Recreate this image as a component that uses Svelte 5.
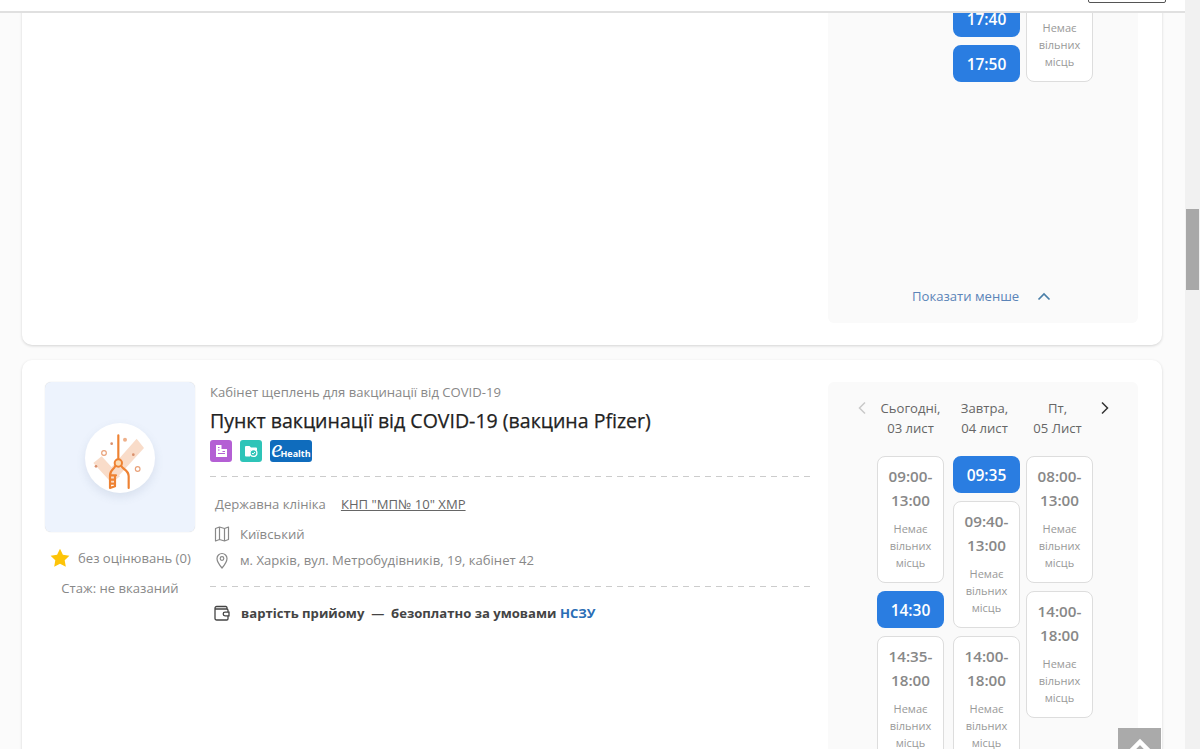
<script>
  const none = 'Немає вільних місць';

  // slot lists per day column, range slots are the tall grey ones
  const days = [
    {
      top: 'Сьогодні,', bottom: '03 лист',
      slots: [{ from: '09:00', to: '13:00' }, { time: '14:30' }, { from: '14:35', to: '18:00' }]
    },
    {
      top: 'Завтра,', bottom: '04 лист',
      slots: [{ time: '09:35' }, { from: '09:40', to: '13:00' }, { from: '14:00', to: '18:00' }]
    },
    {
      top: 'Пт,', bottom: '05 Лист',
      slots: [{ from: '08:00', to: '13:00' }, { from: '14:00', to: '18:00' }]
    }
  ];

  // tail of the previous card, its upper part sits under the top bar
  const prevDays = [[], [{ time: '17:40' }, { time: '17:50' }], [{}]];
</script>

{#snippet slot(s)}
  {#if s.time}
    <button class="slot free">{s.time}</button>
  {:else}
    <div class="slot busy" class:no-range={!s.from}>
      {#if s.from}
        <div class="range">{s.from}-<br />{s.to}</div>
      {/if}
      <div class="none">{none}</div>
    </div>
  {/if}
{/snippet}

<div class="page">
  <div class="main">
    <header class="topbar"><span class="top-btn"></span></header>

    <div class="list">
      <section class="card card-prev">
        <div class="spacer"></div>
        <aside class="schedule">
          <div class="columns prev-columns">
            {#each prevDays as col}
              <div class="col">
                {#each col as s}
                  {@render slot(s)}
                {/each}
              </div>
            {/each}
          </div>
          <a class="less" href="#less">
            <span>Показати менше</span>
            <svg width="14" height="9" viewBox="0 0 14 9"><path d="M1.5 7.500 7 2l5.500 5.500" fill="none" stroke="#4a7fa8" stroke-width="1.700" /></svg>
          </a>
        </aside>
      </section>

      <section class="card">
        <div class="profile">
          <div class="avatar">
            <div class="circle">
              <svg width="70" height="70" viewBox="15 15 210 210">
                <path d="M40 135 65 115 120 175 95 195ZM170 62 192 90 110 180 88 155Z" fill="#f9dcc9" />
                <circle cx="72" cy="105" r="7" fill="none" stroke="#e9a27a" stroke-width="3.500" />
                <circle cx="173" cy="153" r="7" fill="none" stroke="#e9a27a" stroke-width="3.500" />
                <circle cx="95" cy="77" r="4" fill="#d98f6c" />
                <circle cx="135" cy="65" r="6" fill="#eeb08a" />
                <circle cx="160" cy="110" r="4" fill="#d98f6c" />
                <circle cx="48" cy="145" r="4" fill="#d98f6c" />
                <path d="M115 52V124M90 210V172C90 155 105 152 105 145M125 145C125 152 146 155 146 175V210M90 172H108M92 185H105M92 197H105M105 172V205L90 210" fill="none" stroke="#ee8233" stroke-width="6.500" stroke-linecap="round" stroke-linejoin="round" />
                <circle cx="115" cy="135" r="11" fill="#fbdcb5" stroke="#ee8233" stroke-width="6" />
              </svg>
            </div>
          </div>
          <div class="rating">
            <svg width="20" height="20" viewBox="0 0 20 20"><path d="M10 .8l2.900 6 6.500.9-4.700 4.600 1.100 6.500L10 15.700l-5.800 3.100 1.100-6.500L.6 7.700l6.500-.9z" fill="#fdc408" /></svg>
            <span>без оцінювань (0)</span>
          </div>
          <div class="exp">Стаж: не вказаний</div>
        </div>

        <div class="info">
          <div class="kind">Кабінет щеплень для вакцинації від COVID-19</div>
          <h2>Пункт вакцинації від COVID-19 (вакцина Pfizer)</h2>
          <div class="badges dashed">
            <span class="badge purple">
              <svg width="16" height="16" viewBox="0 0 16 16"><path d="M3 2h5.500v4H14v8H3z" fill="#fff" /><path d="M5 4.500h1.500M5 7h1.500M9.500 8.500H12M5 10.500h7" stroke="#b45fd4" stroke-width="1" /></svg>
            </span>
            <span class="badge teal">
              <svg width="16" height="16" viewBox="0 0 16 16"><path d="M2 4a1 1 0 0 1 1-1h3.500l1.500 1.500h5a1 1 0 0 1 1 1V7H7v6.500H3a1 1 0 0 1-1-1z" fill="#fff" /><circle cx="10.500" cy="10" r="3.400" fill="none" stroke="#fff" stroke-width="1.200" /><path d="M9 10l1.100 1.100 1.900-2.100" fill="none" stroke="#fff" stroke-width="1" /></svg>
            </span>
            <span class="badge ehealth"><i>e</i><b>Health</b></span>
          </div>

          <div class="rows dashed">
            <div class="row clinic">
              <span>Державна клініка</span>
              <a href="#clinic">КНП "МП№ 10" ХМР</a>
            </div>
            <div class="row">
              <svg width="16" height="16" viewBox="0 0 16 16"><path d="M1.500 2.500 5.500 1l5 1.500 4-1.500v12.500l-4 1.500-5-1.500-4 1.500zM5.500 1v12.500M10.500 2.500V15" fill="none" stroke="#888" stroke-width="1.200" stroke-linejoin="round" /></svg>
              <span>Київський</span>
            </div>
            <div class="row">
              <svg width="16" height="17" viewBox="0 0 16 17"><path d="M8 16C5 12.500 3 10 3 6.500a5 5 0 0 1 10 0C13 10 11 12.500 8 16z" fill="none" stroke="#888" stroke-width="1.200" stroke-linejoin="round" /><circle cx="8" cy="6.500" r="1.800" fill="none" stroke="#888" stroke-width="1.200" /></svg>
              <span>м. Харків, вул. Метробудівників, 19, кабінет 42</span>
            </div>
          </div>

          <div class="price">
            <svg width="16" height="16" viewBox="0 0 16 16"><path d="M13 3.500V2.700A1.200 1.200 0 0 0 11.800 1.500H2.700A1.700 1.700 0 0 0 1 3.200v10A1.700 1.700 0 0 0 2.700 15h10a1.300 1.300 0 0 0 1.300-1.300V11M14 7V5.300A1.300 1.300 0 0 0 12.700 4H1.500M15 7.200H11a1.800 1.800 0 0 0 0 3.600h4z" fill="none" stroke="#444" stroke-width="1.300" /></svg>
            <span class="price-text">вартість прийому&nbsp; —&nbsp; безоплатно за умовами <a href="#nszu">НСЗУ</a></span>
          </div>
        </div>

        <aside class="schedule">
          <div class="head">
            <span class="arrow left">
              <svg width="10" height="14" viewBox="0 0 10 14"><path d="M8 1.500 2.500 7 8 12.500" fill="none" stroke="#c9c9c9" stroke-width="1.500" /></svg>
            </span>
            <div class="columns">
              {#each days as d}
                <div class="col day">{d.top}<br />{d.bottom}</div>
              {/each}
            </div>
            <span class="arrow right">
              <svg width="10" height="14" viewBox="0 0 10 14"><path d="M2 1.500 7.500 7 2 12.500" fill="none" stroke="#333" stroke-width="1.500" /></svg>
            </span>
          </div>
          <div class="columns">
            {#each days as d}
              <div class="col">
                {#each d.slots as s}
                  {@render slot(s)}
                {/each}
              </div>
            {/each}
          </div>
        </aside>
      </section>
    </div>

    <a class="to-top" href="#top" aria-label="Вгору">
      <svg width="26" height="16" viewBox="0 0 26 16"><path d="M3 15 13 5l10 10" fill="none" stroke="#fff" stroke-width="4.500" /></svg>
    </a>
  </div>

  <div class="scrollbar"><div class="thumb"></div></div>
</div>

<style>
  :global(body) {
    margin: 0;
    font-family: "Open Sans", "Noto Sans", sans-serif;
  }

  .page {
    display: flex;
    height: 749px;
    overflow: hidden;
    background: #fbfbfb;
  }

  .main {
    position: relative;
    flex: 1;
    min-width: 0;
    overflow: hidden;
  }

  .topbar {
    position: absolute;
    top: 0;
    left: 0;
    right: 0;
    z-index: 2;
    height: 11px;
    background: #fff;
    border-bottom: 2px solid #e0e0e0;
  }

  .top-btn {
    position: absolute;
    left: 1088px;
    top: -10px;
    width: 76px;
    height: 11px;
    border: 1px solid #555;
    border-radius: 2px;
  }

  .list {
    display: flex;
    flex-direction: column;
    gap: 15px;
    margin-top: -119px;
    padding: 0 23px 0 22px;
  }

  .card {
    display: flex;
    box-sizing: border-box;
    width: 1140px;
    padding: 22px 24px 22px 23px;
    background: #fff;
    border-radius: 10px;
    box-shadow: 0 1px 3px rgba(0, 0, 0, 0.16);
  }

  .card-prev {
    height: 464px;
  }

  .spacer {
    flex: 1;
  }

  .profile {
    flex: none;
    width: 150px;
    text-align: center;
    font-size: 13.1px;
    color: #888;
  }

  .avatar {
    display: flex;
    align-items: center;
    justify-content: center;
    height: 150px;
    background: #edf3fd;
    border-radius: 6px;
    box-shadow: 0 0 1px rgba(0, 0, 0, 0.2);
  }

  .circle {
    display: flex;
    align-items: center;
    justify-content: center;
    width: 70px;
    height: 70px;
    margin-top: 2px;
    background: #fff;
    border-radius: 50%;
    box-shadow: 0 4px 10px rgba(90, 110, 150, 0.14);
  }

  .rating {
    display: flex;
    align-items: center;
    gap: 8px;
    margin: 16px 0 0 5px;
    line-height: 20px;
    white-space: nowrap;
  }

  .exp {
    margin-top: 10px;
    line-height: 20px;
  }

  .info {
    flex: none;
    width: 602px;
    margin-left: 15px;
    margin-right: 16px;
  }

  .kind {
    font-size: 13.1px;
    line-height: 20px;
    color: #888;
  }

  h2 {
    margin: 6px 0 0;
    font-size: 19.55px;
    font-weight: 500;
    line-height: 26px;
    color: #222;
    white-space: nowrap;
    -webkit-text-stroke: 0.25px #222;
  }

  .dashed {
    background-image: repeating-linear-gradient(90deg, #ccc 0 6px, transparent 6px 11px);
    background-size: 100% 1px;
    background-position: left bottom;
    background-repeat: no-repeat;
  }

  .badges {
    display: flex;
    gap: 8px;
    margin-top: 6px;
    padding-bottom: 15px;
  }

  .badge {
    display: flex;
    align-items: center;
    justify-content: center;
    width: 22px;
    height: 22px;
    border-radius: 3px;
  }

  .purple {
    background: #b45fd4;
  }

  .teal {
    background: #2ec4b8;
  }

  .ehealth {
    width: 42px;
    background: #0f6cbd;
    color: #fff;
    line-height: 1;
  }

  .ehealth i {
    font-family: "Liberation Serif", serif;
    font-size: 25px;
    margin-top: -6px;
  }

  .ehealth b {
    font-size: 9px;
    margin: 4px 0 0 -2px;
  }

  .rows {
    padding: 17px 0 17px 4px;
    font-size: 13.1px;
    color: #888;
  }

  .row {
    display: flex;
    align-items: center;
    gap: 10px;
    height: 20px;
    margin-top: 10px;
    white-space: nowrap;
  }

  .row:last-child {
    margin-top: 6px;
  }

  .clinic {
    margin-top: 0;
    gap: 15px;
    padding-left: 1px;
  }

  .clinic a {
    color: #666;
    text-decoration: underline;
  }

  .price {
    display: flex;
    align-items: center;
    gap: 11px;
    margin-top: 16px;
    padding-left: 4px;
    font-size: 13.1px;
    line-height: 20px;
    font-weight: 700;
    color: #444;
  }

  .price-text {
    white-space: nowrap;
  }

  .price a {
    color: #2a6db5;
    text-decoration: none;
  }

  .schedule {
    display: flex;
    flex-direction: column;
    flex: none;
    box-sizing: border-box;
    width: 310px;
    padding-left: 49px;
    background: #fafafa;
    border-radius: 6px;
  }

  .head {
    position: relative;
    padding: 16px 0 18px;
  }

  .arrow {
    position: absolute;
    top: 19px;
    line-height: 0;
  }

  .left {
    left: -20px;
  }

  .right {
    left: 223px;
  }

  .columns {
    display: flex;
    gap: 6px;
  }

  .col {
    display: flex;
    flex-direction: column;
    gap: 8px;
    width: 67px;
  }

  .col:first-child {
    margin-right: 3px;
  }

  .day {
    display: block;
    font-size: 13.1px;
    line-height: 20px;
    color: #666;
    text-align: center;
    white-space: nowrap;
  }

  .day:first-child {
    margin-right: 1px;
  }

  .slot {
    box-sizing: border-box;
    width: 67px;
    border-radius: 8px;
    text-align: center;
  }

  .free {
    height: 37px;
    padding: 0;
    border: 0;
    background: #2a7de1;
    color: #fff;
    font-family: inherit;
    font-size: 15.5px;
    font-weight: 600;
  }

  .busy {
    padding: 7px 0 11px;
    background: #fff;
    border: 1px solid #ddd;
    color: #888;
  }

  .no-range {
    padding-top: 55px;
  }

  .range {
    font-size: 15.2px;
    font-weight: 600;
    line-height: 24px;
  }

  .none {
    margin: 8px 5px 0;
    font-size: 11px;
    line-height: 17px;
    color: #999;
  }

  .prev-columns {
    align-items: flex-end;
    margin-top: 52px;
  }

  .less {
    display: flex;
    align-items: center;
    gap: 18px;
    margin: auto 0 17px 35px;
    font-size: 13.1px;
    line-height: 20px;
    color: #5b84b8;
    text-decoration: none;
  }

  .to-top {
    position: absolute;
    left: 1118px;
    top: 728px;
    display: flex;
    justify-content: center;
    width: 43px;
    height: 43px;
    padding-top: 9px;
    box-sizing: border-box;
    background: #aaa;
  }

  .scrollbar {
    flex: none;
    width: 15px;
    background: #f1f1f1;
  }

  .thumb {
    width: 13px;
    height: 81px;
    margin: 209px 1px 0;
    background: #a8a8a8;
  }
</style>
